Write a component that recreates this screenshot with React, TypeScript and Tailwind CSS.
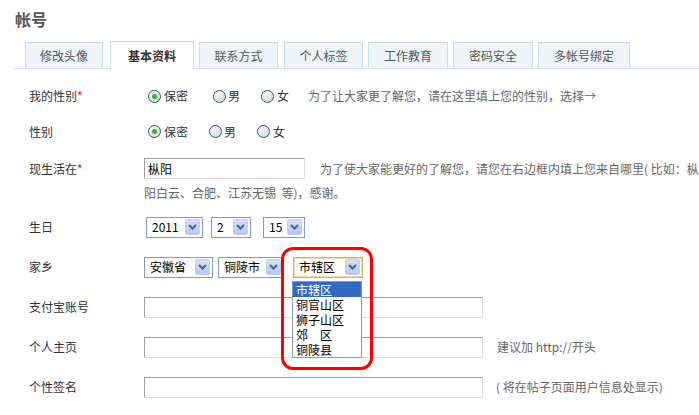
import type { ReactNode } from "react"

const tabs = [
  { label: "修改头像", cls: "ml-[11px] w-[78px]" },
  { label: "基本资料", cls: "ml-[7px] w-[84px]", active: true },
  { label: "联系方式", cls: "ml-[5px] w-[79px]" },
  { label: "个人标签", cls: "ml-[6px] w-[79px]" },
  { label: "工作教育", cls: "ml-[5px] w-[80px]" },
  { label: "密码安全", cls: "ml-[5px] w-[80px]" },
  { label: "多帐号绑定", cls: "ml-[5px] w-[92px]" },
]

const districts = ["市辖区", "铜官山区", "狮子山区", "郊　区", "铜陵县"]

function Radio({ checked, className }: { checked?: boolean; className?: string }) {
  return (
    <span
      className={`inline-flex h-[13px] w-[13px] shrink-0 items-center justify-center rounded-full border border-[#1f5a8a] bg-linear-to-br from-white to-[#d3d3ce] ${className ?? ""}`}
    >
      {checked && <span className="h-[5px] w-[5px] rounded-full bg-[#2fb52f]" />}
    </span>
  )
}

function Select({ text, className, focused }: { text: string; className: string; focused?: boolean }) {
  return (
    <div
      className={`flex h-[21px] items-center justify-between border bg-white pl-[5px] pr-[2px] text-black ${
        focused ? "border-[#d9ae5c] shadow-[inset_0_0_0_1px_#f3dca8]" : "border-[#7f9db9]"
      } ${className}`}
    >
      <span>{text}</span>
      <span className="flex h-[16px] w-[15px] items-center justify-center rounded-[2px] border border-[#bdd0f7] bg-linear-to-b from-[#d4e0fb] to-[#b3c8f5]">
        <svg width="9" height="6" viewBox="0 0 9 6">
          <polyline points="1,1 4.5,4.5 8,1" fill="none" stroke="#4d6185" strokeWidth="2" />
        </svg>
      </span>
    </div>
  )
}

function TextInput({ value, className }: { value?: string; className: string }) {
  return (
    <div
      className={`flex h-[21px] items-center border border-t-[#a0a0a0] border-l-[#a0a0a0] border-b-[#e0e0e0] border-r-[#e0e0e0] bg-white pl-[3px] text-black ${className}`}
    >
      {value}
    </div>
  )
}

function Row({ label, required, h, children }: { label: string; required?: boolean; h: string; children?: ReactNode }) {
  return (
    <div className={`flex items-center ${h}`}>
      <div className="w-[115px] shrink-0 text-[#333]">
        {label}
        {required && <span className="text-[#ff0000]">*</span>}
      </div>
      {children}
    </div>
  )
}

export default function App() {
  return (
    <div className="relative h-[415px] w-[699px] overflow-hidden bg-white font-['SimSun','Noto_Sans_CJK_SC',sans-serif] text-[12px] leading-[16px]">
      <div className="h-[42px] pl-[15px] pt-[9px] text-[16px] font-bold leading-[20px] text-[#555]">帐号</div>

      <div className="ml-[14px] flex h-[27px] items-end border-b border-[#c6dfec]">
        {tabs.map((t) => (
          <div
            key={t.label}
            className={`flex items-center justify-center border border-b-0 border-[#c6dfec] ${t.cls} ${
              t.active
                ? "-mb-px h-[28px] bg-white font-bold text-[#333]"
                : "h-[26px] bg-[#eef5fa] text-[#555]"
            }`}
          >
            {t.label}
          </div>
        ))}
      </div>

      <div className="pl-[29px] pt-[9px]">
        <Row label="我的性别" required h="h-[36px]">
          <Radio checked className="ml-[4px]" />
          <span className="ml-[3px] text-[#333]">保密</span>
          <Radio className="ml-[25px]" />
          <span className="ml-[2px] text-[#333]">男</span>
          <Radio className="ml-[21px]" />
          <span className="ml-[3px] text-[#333]">女</span>
          <span className="ml-[19px] whitespace-nowrap text-[#666]">为了让大家更了解您，请在这里填上您的性别，选择→</span>
        </Row>

        <Row label="性别" h="h-[35px]">
          <Radio checked className="ml-[4px]" />
          <span className="ml-[3px] text-[#333]">保密</span>
          <Radio className="ml-[21px]" />
          <span className="ml-[2px] text-[#333]">男</span>
          <Radio className="ml-[21px]" />
          <span className="ml-[3px] text-[#333]">女</span>
        </Row>

        <div className="flex items-start pb-[6px] pt-[9px]">
          <div className="w-[115px] shrink-0 pt-[3px] text-[#333]">
            现生活在<span className="text-[#ff0000]">*</span>
          </div>
          <div className="flex flex-col">
            <div className="flex items-center whitespace-nowrap">
              <TextInput value="枞阳" className="w-[161px]" />
              <span className="ml-[15px] text-[#666]">为了使大家能更好的了解您，请您在右边框内填上您来自哪里( 比如：枞</span>
            </div>
            <div className="mt-[6px] whitespace-pre text-[#666]">阳白云、合肥、江苏无锡  等)，感谢。</div>
          </div>
        </div>

        <Row label="生日" h="h-[40px]">
          <Select text="2011" className="ml-[2px] w-[57px]" />
          <Select text="2" className="ml-[8px] w-[40px]" />
          <Select text="15" className="ml-[12px] w-[42px]" />
        </Row>

        <Row label="家乡" h="h-[40px]">
          <Select text="安徽省" className="w-[69px]" />
          <Select text="铜陵市" className="ml-[5px] w-[66px]" />
          <Select text="市辖区" focused className="ml-[9px] w-[70px]" />
        </Row>

        <Row label="支付宝账号" h="h-[40px]">
          <TextInput className="w-[339px]" />
        </Row>

        <Row label="个人主页" h="h-[40px]">
          <TextInput className="w-[339px]" />
          <span className="ml-[14px] text-[#666]">建议加 http://开头</span>
        </Row>

        <Row label="个性签名" h="h-[40px]">
          <TextInput className="w-[339px]" />
          <span className="ml-[13px] text-[#666]">( 将在帖子页面用户信息处显示)</span>
        </Row>
      </div>

      {/* open dropdown list of the focused select */}
      <div className="absolute left-[292px] top-[281px] w-[70px] border border-[#7f9db9] bg-white text-black">
        {districts.map((d, i) => (
          <div
            key={d}
            className={`flex h-[15px] items-center overflow-hidden whitespace-pre pl-[3px] text-[12px] leading-[13px] ${
              i === 0 ? "bg-[#316ac5] text-white" : ""
            }`}
          >
            {d}
          </div>
        ))}
      </div>

      {/* red highlight marker */}
      <div className="pointer-events-none absolute left-[281px] top-[247px] h-[123px] w-[92px] rounded-[12px] border-[3px] border-[#ff0000]" />
    </div>
  )
}
